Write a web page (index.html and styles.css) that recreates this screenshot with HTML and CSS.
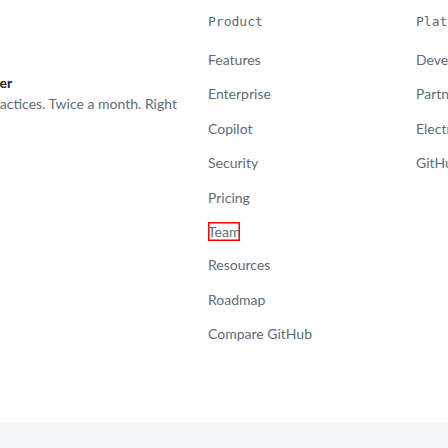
FILE: index.html
```html
<!DOCTYPE html>
<html lang="en">
<head>
<meta charset="utf-8">
<title>Footer</title>
<link rel="stylesheet" href="styles.css">
</head>
<body>
<div class="page">
  <footer class="footer">
    <div class="newsletter">
      <div class="nl-inner">
        <h3 class="nl-title">Subscribe to our developer newsletter</h3>
        <p class="nl-text">Get tips, technical guides, and best practices. Twice a month. Right<br>in your inbox.</p>
      </div>
    </div>
    <nav class="col">
      <h3 class="col-title">Product</h3>
      <ul class="links">
        <li><a href="#">Features</a></li>
        <li><a href="#">Enterprise</a></li>
        <li><a href="#">Copilot</a></li>
        <li><a href="#">Security</a></li>
        <li><a href="#">Pricing</a></li>
        <li><a href="#" class="marked">Team</a></li>
        <li><a href="#">Resources</a></li>
        <li><a href="#">Roadmap</a></li>
        <li><a href="#">Compare GitHub</a></li>
      </ul>
    </nav>
    <nav class="col">
      <h3 class="col-title">Platform</h3>
      <ul class="links">
        <li><a href="#">Developer API</a></li>
        <li><a href="#">Partners</a></li>
        <li><a href="#">Electron</a></li>
        <li><a href="#">GitHub Desktop</a></li>
      </ul>
    </nav>
  </footer>
  <div class="band"></div>
</div>
</body>
</html>
```

FILE: styles.css
```css
html, body {
  margin: 0;
  padding: 0;
  background: #ffffff;
  overflow: hidden;
}
.page {
  width: 448px;
  height: 448px;
  display: flex;
  flex-direction: column;
  overflow: hidden;
  font-family: Lato, "Noto Sans", sans-serif;
}
.footer {
  height: 422px;
  flex: none;
  display: flex;
  padding-top: 12px;
  box-sizing: border-box;
}
.newsletter {
  flex: none;
  width: 477px;
  margin-left: -300px;
  margin-right: 31px;
  margin-top: 60px;
  display: flex;
  justify-content: flex-end;
  align-items: flex-start;
}
.nl-inner {
  flex: none;
}
.nl-title {
  margin: 0;
  font-size: 14px;
  line-height: 21px;
  font-weight: 700;
  letter-spacing: 0.15px;
  color: #1f2328;
  white-space: nowrap;
}
.nl-text {
  margin: 0;
  font-size: 14px;
  line-height: 21px;
  color: #616b76;
  white-space: nowrap;
}
.col {
  flex: none;
  width: 208px;
}
.col-title {
  margin: 0 0 16px;
  font-family: "DejaVu Sans Mono", "Liberation Mono", monospace;
  font-size: 13px;
  line-height: 20px;
  font-weight: 400;
  color: #616b76;
  white-space: nowrap;
}
.links {
  list-style: none;
  margin: 0;
  padding: 0;
}
.links li {
  margin-bottom: 12px;
  line-height: 21.4px;
  white-space: nowrap;
}
.links a {
  font-size: 14px;
  color: #616b76;
  text-decoration: none;
}
.marked {
  display: inline-block;
  line-height: 19px;
  box-shadow: inset 0 0 0 1.5px #ff0000;
}
.band {
  flex: 1;
  background: #f6f8fa;
}
```
